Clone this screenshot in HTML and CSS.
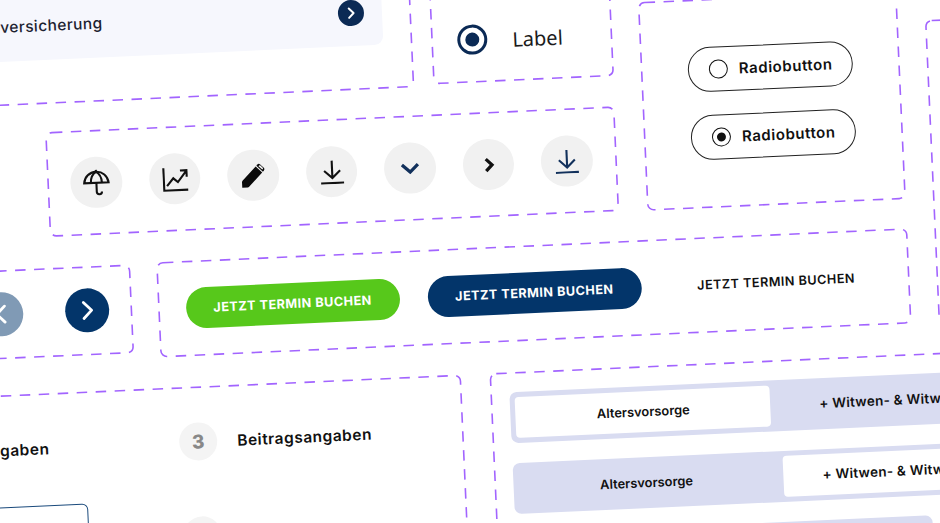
FILE: index.html
```html
<!DOCTYPE html>
<html lang="de">
	<head>
		<title>Komponenten</title>
		<link rel="stylesheet" href="styles.css">
	</head>
	<body>
		<div class="board">

			<div class="panel panel-card">
				<svg class="dash"><rect></rect></svg>
				<div class="card">
					<span class="card-text">versicherung</span>
					<span class="card-go">
						<svg viewBox="0 0 24 24" width="14" height="14"><path d="M8.500 4l8 8-8 8" fill="none" stroke="#fff" stroke-width="3.400" stroke-linecap="round" stroke-linejoin="round"/></svg>
					</span>
				</div>
			</div>

			<div class="panel panel-label">
				<svg class="dash"><rect></rect></svg>
				<span class="big-radio"></span>
				<span class="big-label">Label</span>
			</div>

			<div class="panel panel-radios">
				<svg class="dash"><rect></rect></svg>
				<div class="pill"><span class="radio"></span>Radiobutton</div>
				<div class="pill"><span class="radio on"></span>Radiobutton</div>
			</div>

			<div class="panel panel-icons">
				<svg class="dash"><rect></rect></svg>
				<span class="icon-btn">
					<svg viewBox="0 1.500 28 28" width="28" height="28" class="line"><path d="M14 4.500C7.500 4.500 2.500 9 1.800 15.500h24.400C25.500 9 20.500 4.500 14 4.500z"/><path d="M14 4.500C10.500 6.500 8.500 10.500 8.500 15.500M14 4.500c3.500 2 5.500 6 5.500 11M14 2.500v2M14 15.500v9a2.600 2.600 0 0 0 5.200 0"/></svg>
				</span>
				<span class="icon-btn">
					<svg viewBox="0 0 26 26" width="26" height="26" class="line"><path d="M1.500 1.500v22.500h24"/><path d="M4.500 19.500l6.500-7.500 4.500 4 8.500-10.500M18 4.500h6.500v6.500"/></svg>
				</span>
				<span class="icon-btn">
					<svg viewBox="0 0 26 26" width="26" height="26"><path d="M1.500 24.500v-5.500a2 2 0 0 1 .6-1.400L15.800 3.900l6.300 6.300L8.400 23.900a2 2 0 0 1-1.400.6z" fill="#0b0b0b"/><path d="M17.600 2.100a2 2 0 0 1 2.800 0l3.500 3.500a2 2 0 0 1 0 2.800l-1 1-6.300-6.300z" fill="#0b0b0b"/><path d="M18.700 3.700l.6-.6a1 1 0 0 1 1.300 0l2.300 2.300a1 1 0 0 1 0 1.300l-.6.600z" fill="#f1f1f1"/></svg>
				</span>
				<span class="icon-btn">
					<svg viewBox="0 0 24 24" width="24" height="24" class="line"><path d="M12 .5v17M4 10.500l8 7.500 8-7.500M.5 23h23"/></svg>
				</span>
				<span class="icon-btn">
					<svg viewBox="0 0 20 12" width="20" height="12" class="line navy thick"><path d="M2 2l8 7.500L18 2"/></svg>
				</span>
				<span class="icon-btn">
					<svg viewBox="0 0 12 18" width="12" height="18" class="line thick"><path d="M3 3l6 6-6 6"/></svg>
				</span>
				<span class="icon-btn">
					<svg viewBox="0 0 24 24" width="24" height="24" class="line navy"><path d="M12 .5v17M4 10.500l8 7.500 8-7.500M.5 23h23"/></svg>
				</span>
			</div>

			<div class="panel panel-arrows">
				<svg class="dash"><rect></rect></svg>
				<span class="arrow off">
					<svg viewBox="0 0 24 24" width="24" height="24"><path d="M15.500 4l-8 8 8 8" fill="none" stroke="#fff" stroke-width="2.800" stroke-linecap="round" stroke-linejoin="round"/></svg>
				</span>
				<span class="arrow">
					<svg viewBox="0 0 24 24" width="24" height="24"><path d="M8.500 4l8 8-8 8" fill="none" stroke="#fff" stroke-width="2.800" stroke-linecap="round" stroke-linejoin="round"/></svg>
				</span>
			</div>

			<div class="panel panel-buttons">
				<svg class="dash"><rect></rect></svg>
				<a class="btn green">Jetzt Termin buchen</a>
				<a class="btn blue">Jetzt Termin buchen</a>
				<a class="btn plain">Jetzt Termin buchen</a>
			</div>

			<div class="panel panel-steps">
				<svg class="dash"><rect></rect></svg>
				<div class="step-col first">
					<div class="step"><span class="step-text">Angaben</span></div>
					<div class="field"></div>
				</div>
				<div class="step-col">
					<div class="step"><span class="step-num">3</span><span class="step-text">Beitragsangaben</span></div>
					<div class="step"><span class="step-num"></span></div>
				</div>
			</div>

			<div class="panel panel-tabs">
				<svg class="dash"><rect></rect></svg>
				<div class="tabs">
					<div class="tab active">Altersvorsorge</div>
					<div class="tab long">+ Witwen- &amp; Witwenrente</div>
				</div>
				<div class="tabs">
					<div class="tab">Altersvorsorge</div>
					<div class="tab long active">+ Witwen- &amp; Witwenrente</div>
				</div>
				<div class="tabs short"></div>
			</div>

			<div class="panel panel-edge">
				<svg class="dash"><rect></rect></svg>
			</div>

		</div>
	</body>
</html>
```

FILE: styles.css
```css
html, body {
	margin: 0;
	width: 940px;
	height: 523px;
	overflow: hidden;
	background-color: white;
}

body {
	font-family: "Inter", "Liberation Sans", sans-serif;
	color: #111;
}

/* the whole design sheet is tilted */
.board {
	position: absolute;
	left: 0;
	top: 0;
	width: 1100px;
	height: 700px;
	transform: rotate(-2.6deg);
	transform-origin: 0 0;
}

.panel {
	position: absolute;
	box-sizing: border-box;
	display: flex;
}

.dash {
	position: absolute;
	left: 0;
	top: 0;
	width: 100%;
	height: 100%;
	overflow: visible;
}

.dash rect {
	x: 0.8px;
	y: 0.8px;
	width: calc(100% - 1.6px);
	height: calc(100% - 1.6px);
	rx: 6px;
	fill: none;
	stroke: #a264ff;
	stroke-width: 1.6px;
	stroke-dasharray: 10.5 8.5;
}

/* top left card */
.panel-card {
	left: -80px;
	top: -40px;
	width: 490px;
	height: 146px;
	padding: 36px 0 0 60px;
}

.card {
	width: 401px;
	height: 66px;
	box-sizing: border-box;
	padding: 0 18px 0 19px;
	display: flex;
	align-items: center;
	justify-content: space-between;
	background-color: #f6f7fd;
	border-radius: 9px;
}

.card-text {
	margin-bottom: 3px;
	font-size: 15.500px;
	font-weight: 500;
	letter-spacing: 0.4px;
	color: #1c2230;
}

.card-go {
	width: 26px;
	height: 26px;
	border-radius: 50%;
	background-color: #0b2a55;
	display: flex;
	align-items: center;
	justify-content: center;
}

/* big radio with label */
.panel-label {
	left: 428.500px;
	top: -40px;
	width: 181px;
	height: 144px;
	padding: 0 0 28px 26.500px;
	align-items: flex-end;
	gap: 25px;
}

.big-radio {
	width: 30px;
	height: 30px;
	box-sizing: border-box;
	border: 3.500px solid #0b2a55;
	border-radius: 50%;
	display: flex;
	align-items: center;
	justify-content: center;
}

.big-radio::after {
	content: "";
	width: 14px;
	height: 14px;
	border-radius: 50%;
	background-color: #0b2a55;
}

.big-label {
	margin-bottom: -3px;
	font-family: "Noto Sans", sans-serif;
	font-size: 20px;
	line-height: 32px;
	color: #1b1b1b;
}

/* radio pills */
.panel-radios {
	left: 637px;
	top: 31px;
	width: 259px;
	height: 209px;
	flex-direction: column;
	align-items: center;
	justify-content: center;
	gap: 23px;
}

.pill {
	width: 165px;
	height: 45px;
	box-sizing: border-box;
	padding-left: 20px;
	border: 1.300px solid #222;
	border-radius: 23px;
	display: flex;
	align-items: center;
	gap: 11px;
	font-size: 15px;
	font-weight: 600;
	letter-spacing: 0.55px;
}

.radio {
	width: 19px;
	height: 19px;
	box-sizing: border-box;
	border: 1.600px solid #111;
	border-radius: 50%;
	display: flex;
	align-items: center;
	justify-content: center;
}

.radio.on::after {
	content: "";
	width: 9px;
	height: 9px;
	border-radius: 50%;
	background-color: #111;
}

/* icon row */
.panel-icons {
	left: 38.500px;
	top: 134px;
	width: 570px;
	height: 105px;
	align-items: center;
	justify-content: center;
	gap: 27px;
}

.icon-btn {
	width: 51.500px;
	height: 51.500px;
	border-radius: 50%;
	background-color: #f1f1f1;
	display: flex;
	align-items: center;
	justify-content: center;
}

.line {
	fill: none;
	stroke: #111;
	stroke-width: 2.100;
}

.line.navy {
	stroke: #12315c;
}

.line.thick {
	stroke-width: 3.300;
}

/* slider arrows */
.panel-arrows {
	left: -80px;
	top: 269.500px;
	width: 198px;
	height: 89px;
	padding-right: 23px;
	align-items: center;
	justify-content: flex-end;
	gap: 42px;
}

.arrow {
	width: 44px;
	height: 44px;
	border-radius: 50%;
	background-color: #03356a;
	display: flex;
	align-items: center;
	justify-content: center;
}

.arrow.off {
	background-color: #809ab5;
}

/* buttons */
.panel-buttons {
	left: 143.500px;
	top: 268.500px;
	width: 752px;
	height: 95.500px;
	padding-left: 2px;
	align-items: center;
	justify-content: center;
	gap: 28px;
}

.btn {
	width: 214px;
	height: 41px;
	border-radius: 21px;
	display: flex;
	align-items: center;
	justify-content: center;
	font-size: 12.700px;
	font-weight: 700;
	letter-spacing: 0.45px;
	text-transform: uppercase;
	color: white;
}

.btn.green {
	background-color: #57c81b;
}

.btn.blue {
	background-color: #03356a;
}

.btn.plain {
	color: #111;
	font-weight: 600;
}

/* stepper */
.panel-steps {
	left: -100px;
	top: 394.500px;
	width: 543.500px;
	height: 300px;
	padding: 36.500px 0 0 0;
	justify-content: flex-end;
	gap: 94px;
}

.step-col {
	width: 284.500px;
	display: flex;
	flex-direction: column;
	gap: 56px;
}

.step-col.first {
	width: 165px;
	align-items: flex-end;
	gap: 38px;
}

.step {
	height: 38px;
	display: flex;
	align-items: center;
	gap: 20px;
}

.first .step {
	margin-right: 36px;
}

.step-num {
	width: 38px;
	height: 38px;
	border-radius: 50%;
	background-color: #f4f4f4;
	display: flex;
	align-items: center;
	justify-content: center;
	font-size: 19px;
	font-weight: 800;
	color: #888;
}

.step-text {
	font-size: 15.500px;
	font-weight: 600;
	letter-spacing: 0.5px;
}

.field {
	width: 200px;
	height: 90px;
	box-sizing: border-box;
	border: 1.500px solid #1a4a7c;
	border-radius: 6px;
}

/* tab switches */
.panel-tabs {
	left: 471.500px;
	top: 394.500px;
	width: 600px;
	height: 300px;
	padding: 20px 0 0 19px;
	flex-direction: column;
	gap: 20px;
}

.tabs {
	width: 528px;
	height: 51px;
	box-sizing: border-box;
	padding: 5px;
	border-radius: 7px;
	background-color: #d9dcf1;
	display: flex;
	gap: 10px;
}

.tabs.short {
	width: 417px;
}

.tab {
	flex: 1;
	border-radius: 4px;
	display: flex;
	align-items: center;
	justify-content: center;
	font-size: 12.900px;
	font-weight: 600;
	color: #111;
}

.tab:first-child {
	padding-left: 2px;
}

.tab.long {
	font-size: 13.500px;
	letter-spacing: 0.25px;
}

.tab.active {
	background-color: white;
}

/* only the edge of this one is in the picture */
.panel-edge {
	left: 923px;
	top: 62px;
	width: 120px;
	height: 303.500px;
}
```
